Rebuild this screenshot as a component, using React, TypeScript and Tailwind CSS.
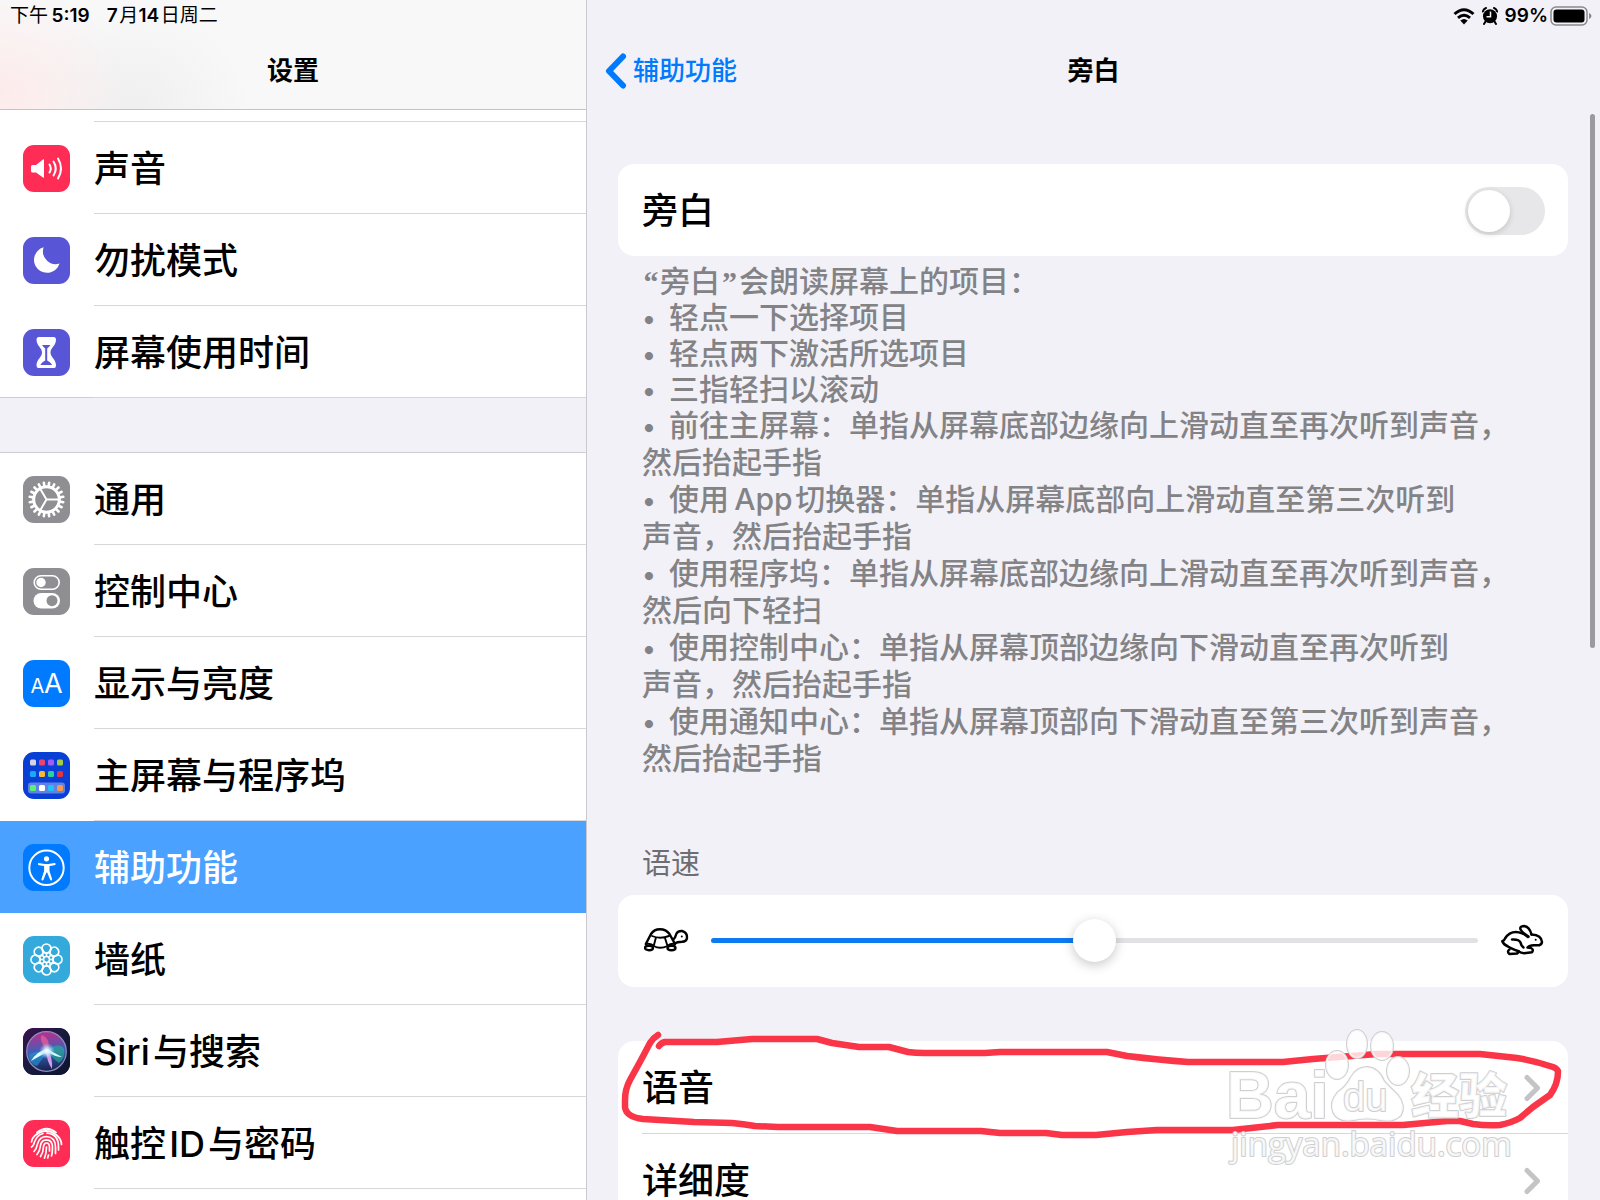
import { useState, type ReactNode } from "react";
import { clsx } from "clsx";

const GEAR_TEETH = Array.from({ length: 20 }, (_, i) => i * 18);
const PETALS = Array.from({ length: 8 }, (_, i) => i * 45);
const APP_COLORS = [
  ["#d5d5e0", "#f0426e", "#a55cf5", "#a5cf3f"],
  ["#17aaf5", "#f5b92c", "#2ecf9f", "#e8333f"],
  ["#5cf07a", "#ffffff", "#1fc4fa", "#f79a4b"],
];

function SoundIcon() {
  return (
    <>
      <path d="M9.5 20H13l7-5.600q1-.6 1 .6v17q0 1.200-1 .6L13 27.500H9.500q-1.500 0-1.500-1.500v-4.500q0-1.500 1.500-1.500z" fill="#fff" />
      <g fill="none" stroke="#fff" strokeWidth="2" strokeLinecap="round">
        <path d="M26.500 19.500q2.500 4 0 8" />
        <path d="M30.500 16.500q4.500 7 0 14" />
        <path d="M35 13.500q6 10 0 20" />
      </g>
    </>
  );
}

function MoonIcon() {
  return <path d="M20.600 10.300A13 13 0 1 0 36.500 26.500A12.800 12.800 0 0 1 20.600 10.300z" fill="#fff" />;
}

function HourglassIcon() {
  return (
    <>
      <path
        d="M15.500 8h15.500q2 0 2 2.500c0 6.500-5.500 8-5.500 13s5.500 6.500 5.500 13q0 2.500-2 2.500h-15.500q-2 0-2-2.500c0-6.500 5.500-8 5.500-13s-5.500-6.500-5.500-13q0-2.500 2-2.500z"
        fill="#fff"
      />
      <path d="M19 16h8.500q-2 2.500-3.300 3.500v12q3 1 5 4.500h-12q2-3.500 5-4.500v-12q-1.500-1-3.200-3.500z" fill="#5856d6" />
    </>
  );
}

function GearIcon() {
  return (
    <g transform="translate(23.500 23.500)" stroke="#fff" fill="none">
      <circle r="12.800" strokeWidth="3" />
      {GEAR_TEETH.map((angle) => (
        <path key={angle} d="M13.500 0H17" strokeWidth="2.600" strokeLinecap="round" transform={`rotate(${angle + 9})`} />
      ))}
      <path d="M0 0H12.500M0 0L-6.300-10.800M0 0L-6.300 10.800" strokeWidth="2" />
    </g>
  );
}

function SwitchesIcon() {
  return (
    <>
      <rect x="11.200" y="7.700" width="25" height="13.600" rx="6.800" fill="none" stroke="#fff" strokeWidth="1.600" />
      <circle cx="18" cy="14.500" r="4.700" fill="#fff" />
      <rect x="10.500" y="25" width="26.500" height="15.500" rx="7.700" fill="#fff" />
      <circle cx="29" cy="32.700" r="5.500" fill="#8e8e93" />
    </>
  );
}

function TextSizeIcon() {
  return (
    <g fill="#fff" className="font-[Inter]">
      <text x="7.500" y="33" fontSize="20">A</text>
      <text x="21" y="33" fontSize="27">A</text>
    </g>
  );
}

function HomeScreenIcon() {
  return (
    <>
      <rect x="5" y="30.500" width="37" height="11" rx="3" fill="#fff" opacity=".35" />
      {APP_COLORS.map((row, y) =>
        row.map((color, x) => (
          <rect key={color} x={7 + x * 9} y={[7.500, 19, 33][y]} width="6" height="6" rx="1.500" fill={color} />
        ))
      )}
    </>
  );
}

function AccessibilityIcon() {
  return (
    <>
      <circle cx="23.500" cy="23.800" r="17.200" fill="none" stroke="#fff" strokeWidth="2" />
      <circle cx="23.500" cy="14.800" r="2.600" fill="#fff" />
      <path
        d="M15.500 19l6 1h4l6-1q1.200 0 1.200 1t-1.200 1.200l-5 .9v4.900l2.600 8q.2 1.200-.7 1.400t-1.400-.9l-2.800-7h-.8l-2.800 7q-.5 1.100-1.400.9t-.7-1.400l2.600-8v-4.900l-5-.9q-1.200-.2-1.200-1.200t1.200-1z"
        fill="#fff"
      />
    </>
  );
}

function WallpaperIcon() {
  return (
    <g transform="translate(23.500 23.500)" fill="none" stroke="#fff" strokeWidth="1.700">
      <circle r="3" />
      {PETALS.map((angle) => (
        <circle key={angle} cy="-11" r="4.500" transform={`rotate(${angle})`} />
      ))}
      {PETALS.map((angle) => (
        <path key={angle} d="M-2.500-7.300Q0-5 2.500-7.300M0-3V-6" transform={`rotate(${angle})`} />
      ))}
    </g>
  );
}

function SiriIcon() {
  return (
    <>
      <defs>
        <linearGradient id="siri-bg" x1="0" y1="0" x2="1" y2="1">
          <stop offset="0" stopColor="#3d1150" />
          <stop offset=".5" stopColor="#171b3d" />
          <stop offset="1" stopColor="#0b1430" />
        </linearGradient>
        <linearGradient id="siri-orb" x1=".4" y1="0" x2=".5" y2="1">
          <stop offset="0" stopColor="#c02c8c" />
          <stop offset=".5" stopColor="#3d60b8" />
          <stop offset="1" stopColor="#15204c" />
        </linearGradient>
        <radialGradient id="siri-glow">
          <stop offset="0" stopColor="#fff" />
          <stop offset=".4" stopColor="#d6f2ff" stopOpacity=".8" />
          <stop offset="1" stopColor="#7fc8ff" stopOpacity="0" />
        </radialGradient>
      </defs>
      <rect width="47" height="47" rx="11" fill="url(#siri-bg)" />
      <circle cx="23.500" cy="23.500" r="19.800" fill="url(#siri-orb)" stroke="#8f8fb8" strokeWidth="1.200" />
      <path d="M24 24Q12 22 6 27Q6 36 14 38Q20 30 24 24z" fill="#1f9bd8" opacity=".6" />
      <path d="M24 23Q34 14 41 20Q43 30 36 35Q28 29 24 23z" fill="#22b596" opacity=".6" />
      <path d="M24 23Q15 11 19 7Q29 12 24 23z" fill="#ef5f97" opacity=".7" />
      <path d="M24 24L8 33Q14 23 24 21L39 29Q32 29 25 24z" fill="#dffcff" />
      <path d="M23 23Q24 34 29 41Q30 31 25 22z" fill="#d59bec" />
      <circle cx="24" cy="23" r="8" fill="url(#siri-glow)" />
    </>
  );
}

function FingerprintIcon() {
  return (
    <g fill="none" stroke="#fff" strokeWidth="1.700" strokeLinecap="round">
      <path d="M14 12.500Q23.500 5 33 12.500" />
      <path d="M8.500 22Q9 18 12 15.500Q23.500 6.500 34 15.500Q38.500 19.500 38.500 24.500" />
      <path d="M8.500 27Q10.500 26 11.500 22Q14 15 20 13.500M24 13.200Q35.500 14 35.500 27V30" />
      <path d="M11 31.500Q13.500 29 14.500 24Q16.500 16.500 23.500 16.500Q32.500 17 32.500 27V33.500" />
      <path d="M14 34.500Q17 31 17.500 25.500Q18.500 19.800 23.500 19.800Q29.500 20 29.500 27.500Q29.500 33 28.500 36" />
      <path d="M17.500 36.500Q20.500 32 20.500 26.500Q21 23 23.500 23Q26.500 23 26.500 27.500V31M25.500 35L24.700 38" />
      <path d="M21.500 38Q23.500 33 23.500 27" />
    </g>
  );
}

type Item = { label: string; bg: string; icon: ReactNode };

const alertItems: Item[] = [
  { label: "声音", bg: "bg-[#ff2d55]", icon: <SoundIcon /> },
  { label: "勿扰模式", bg: "bg-[#5856d6]", icon: <MoonIcon /> },
  { label: "屏幕使用时间", bg: "bg-[#5856d6]", icon: <HourglassIcon /> },
];

// hair spaces separate the Latin words from the Chinese text
const generalItems: Item[] = [
  { label: "通用", bg: "bg-[#8e8e93]", icon: <GearIcon /> },
  { label: "控制中心", bg: "bg-[#8e8e93]", icon: <SwitchesIcon /> },
  { label: "显示与亮度", bg: "bg-[#007aff]", icon: <TextSizeIcon /> },
  { label: "主屏幕与程序坞", bg: "bg-[#0a3fd6]", icon: <HomeScreenIcon /> },
  { label: "辅助功能", bg: "bg-[#007aff]", icon: <AccessibilityIcon /> },
  { label: "墙纸", bg: "bg-[#34aadc]", icon: <WallpaperIcon /> },
  { label: "Siri\u200a与搜索", bg: "bg-[#171b3d]", icon: <SiriIcon /> },
  { label: "触控\u200aID\u200a与密码", bg: "bg-[#ff2d55]", icon: <FingerprintIcon /> },
];

// each entry is one bullet, broken where the panel breaks its lines
const tips = [
  ["轻点一下选择项目"],
  ["轻点两下激活所选项目"],
  ["三指轻扫以滚动"],
  ["前往主屏幕：单指从屏幕底部边缘向上滑动直至再次听到声音，", "然后抬起手指"],
  ["使用\u2009App\u200a切换器：单指从屏幕底部向上滑动直至第三次听到", "声音，然后抬起手指"],
  ["使用程序坞：单指从屏幕底部边缘向上滑动直至再次听到声音，", "然后向下轻扫"],
  ["使用控制中心：单指从屏幕顶部边缘向下滑动直至再次听到", "声音，然后抬起手指"],
  ["使用通知中心：单指从屏幕顶部向下滑动直至第三次听到声音，", "然后抬起手指"],
];

function SidebarRow({ item, selected }: { item: Item; selected?: boolean }) {
  return (
    <a
      href="#"
      aria-current={selected ? "page" : undefined}
      className={clsx("flex h-[92px] items-center pl-[23px]", selected ? "bg-[#4aa1ff] text-white" : "bg-white")}
    >
      <span className={clsx("size-[47px] shrink-0 overflow-hidden rounded-[11px]", item.bg)}>
        <svg viewBox="0 0 47 47" className="size-full" aria-hidden="true">
          {item.icon}
        </svg>
      </span>
      <span
        className={clsx(
          "ml-6 flex h-full flex-1 items-center border-b pt-[2px] text-[36px] font-medium whitespace-nowrap",
          selected ? "border-transparent" : "border-[#d8d8da]"
        )}
      >
        {item.label}
      </span>
    </a>
  );
}

function Sidebar() {
  return (
    <aside className="flex w-[587px] shrink-0 flex-col border-r border-[#c9c9ce] bg-white">
      <header className="h-[110px] shrink-0 border-b border-[#c4c4c6] bg-[#f8f8f9] bg-[radial-gradient(ellipse_130px_110px_at_0px_95px,#fdebea,transparent),radial-gradient(ellipse_120px_100px_at_130px_110px,#efeff0,transparent)]">
        <div className="flex h-8 items-center gap-[17px] pl-[10px] text-[19px]">
          <span>
            下午{"\u2009"}
            <b className="font-semibold">5:19</b>
          </span>
          <span>
            <b className="font-semibold">7</b>
            {"\u200a"}月<b className="font-semibold">14</b>
            {"\u200a"}日周二
          </span>
        </div>
        <h1 className="flex h-[77px] items-center justify-center text-[26px] font-bold">设置</h1>
      </header>
      <nav aria-label="设置">
        <div className="ml-[94px] h-3 border-b border-[#d8d8da]" />
        {alertItems.map((item) => (
          <SidebarRow key={item.label} item={item} />
        ))}
        <div className="-mt-px h-14 border-y border-[#cfcfd3] bg-[#f2f1f7]" />
        {generalItems.map((item) => (
          <SidebarRow key={item.label} item={item} selected={item.label === "辅助功能"} />
        ))}
      </nav>
    </aside>
  );
}

function StatusIcons() {
  return (
    <div className="flex h-8 items-center justify-end pr-2">
      <svg viewBox="0 0 22 17" className="h-[17px] w-[22px]" aria-label="Wi-Fi">
        <path d="M1.500 6Q11-2.500 20.500 6M5 9.800Q11 4.800 17 9.800" fill="none" stroke="#000" strokeWidth="3" />
        <path d="M7.300 12.600Q11 9.400 14.700 12.600L11 16.600z" />
      </svg>
      <svg viewBox="0 0 16 18" className="ml-[7px] h-[18px] w-4" aria-label="闹钟">
        <circle cx="8" cy="9.300" r="7" />
        <path d="M.8 4.500Q1.500 2 4 1M15.200 4.500Q14.500 2 12 1M3.500 14.500L2 17M12.500 14.500L14 17" stroke="#000" strokeWidth="2" strokeLinecap="round" fill="none" />
        <path d="M8.500 4.500V9.800H4.500" stroke="#f2f1f7" strokeWidth="1.500" fill="none" />
      </svg>
      <span className="ml-[7px] text-[19px] font-semibold">99%</span>
      <svg viewBox="0 0 42 20" className="ml-[2px] h-5 w-[42px]" aria-label="电池">
        <rect x="1" y="1" width="36" height="18" rx="5" fill="none" stroke="#8a8a8e" strokeWidth="1.500" />
        <rect x="3.500" y="3.500" width="31" height="13" rx="3" />
        <path d="M39 7q2.500 1 2.500 3t-2.500 3z" fill="#8a8a8e" />
      </svg>
    </div>
  );
}

function Turtle() {
  return (
    <svg viewBox="0 0 46 26" className="h-[26px] w-[46px] shrink-0" fill="none" stroke="#000" strokeWidth="2.400" strokeLinecap="round" strokeLinejoin="round" aria-hidden="true">
      <path d="M1.800 17L7 7Q10 2.200 16 2.200T25.500 7L31 17" />
      <path d="M8 9Q16 12.500 25 9M11.800 11L9.700 19M21 11L23.500 19M2 17Q7 16 9.700 19Q16 22.500 23.500 19Q27 16 31 17" strokeWidth="1.900" />
      <ellipse cx="5" cy="21" rx="4" ry="2.200" />
      <ellipse cx="27.500" cy="21" rx="4" ry="2.200" />
      <path d="M29 13Q31.500 10.500 32.500 6.500Q34 3.800 38 4Q43.500 5.500 43 11Q42.500 14.500 38 14.800Q33 15 30.500 16.500" />
      <circle cx="37.800" cy="9.500" r="1" fill="#000" stroke="none" />
    </svg>
  );
}

function Rabbit() {
  return (
    <svg viewBox="0 0 45 34" className="h-[34px] w-[45px] shrink-0" fill="none" stroke="#000" strokeWidth="2.500" strokeLinecap="round" strokeLinejoin="round" aria-hidden="true">
      <path d="M31.500 11.500Q29.500 3.500 24 3Q19.500 3.200 20.500 6.500Q22.500 10 28.500 13.500" />
      <path d="M31.500 11.500Q41.500 12 42 19Q41.500 22.800 36 22.300Q30 21.500 27.500 24.500L31 25Q34 26.500 32 29.300L24 30.200Q21 30.200 18 28Q11 25.500 8 23.500Q3.500 21.500 2.300 18.200Q4.500 17.500 5 15.500Q9 9 16 9Q22 9 28 14" />
      <path d="M12 16.500Q19 16 20.500 19.500Q21 22.500 23.500 24.500" />
      <path d="M9.500 26.500Q6.500 28.500 9.500 31L17 30.500L19 28.500" />
      <circle cx="35.700" cy="16.800" r="1" fill="#000" stroke="none" />
    </svg>
  );
}

function DisclosureRow({ label, first }: { label: string; first?: boolean }) {
  return (
    <a
      href="#"
      className={clsx("ml-6 flex h-[92px] items-center justify-between pt-[2px] pr-[27px] text-[36px] font-medium", !first && "border-t border-[#d8d8da]")}
    >
      {label}
      <svg viewBox="0 0 17 28" className="h-7 w-[17px]" fill="none" stroke="#c4c4c7" strokeWidth="5" strokeLinecap="round" strokeLinejoin="round" aria-hidden="true">
        <path d="M3 3.500L13.500 14L3 24.500" />
      </svg>
    </a>
  );
}

function PenMark() {
  return (
    <svg viewBox="618 1000 982 200" className="pointer-events-none absolute -top-[41px] left-0 h-[200px] w-[982px]" aria-hidden="true">
      <path
        d="M658 1035Q653 1038 650 1043L641 1060L630 1080Q625 1089 625 1100V1107Q626 1117 643 1119L694 1122L732 1123Q743 1124 755 1126L778 1127H870L897 1131L981 1131L1000 1133H1046L1062 1135H1096L1127 1132L1157 1130H1233L1278 1125H1403L1447 1121H1460L1473 1124Q1487 1126 1500 1125Q1511 1123 1520 1118L1533 1107L1550 1095Q1558 1084 1558 1072Q1558 1069 1553 1067Q1535 1061 1517 1058L1480 1054H1377L1313 1059L1283 1062H1188Q1160 1060 1127 1056L1107 1052H1000L985 1053H924Q915 1053 908 1052L889 1047H859L832 1043L817 1039H752L717 1042H665Q661 1043 659 1046"
        fill="none"
        stroke="#fa3547"
        strokeWidth="6.500"
        strokeLinecap="round"
        strokeLinejoin="round"
      />
    </svg>
  );
}

function Watermark() {
  return (
    <svg
      viewBox="1218 1020 300 150"
      className="pointer-events-none absolute -top-5 right-[50px] h-[150px] w-[300px]"
      fill="#fff"
      fillOpacity=".8"
      stroke="#cfcfd1"
      strokeWidth="2"
      paintOrder="stroke"
      strokeLinejoin="round"
    >
      <ellipse cx="1337" cy="1064" rx="11" ry="14" />
      <ellipse cx="1357" cy="1043" rx="10" ry="14" />
      <ellipse cx="1382" cy="1045" rx="11" ry="14" />
      <ellipse cx="1398" cy="1070" rx="11" ry="14" />
      <path d="M1367 1066Q1379 1067 1384 1080Q1390 1087 1398 1094Q1406 1105 1401 1114Q1394 1122 1380 1119Q1367 1116 1354 1119Q1338 1122 1333 1111Q1329 1101 1338 1091Q1346 1086 1351 1076Q1357 1066 1367 1066z" />
      <text x="1226" y="1117" fontSize="66" className="font-['Liberation_Sans'] font-bold">Bai</text>
      <text x="1343" y="1110" fontSize="40" className="font-['Liberation_Sans']">du</text>
      <text x="1411" y="1112" fontSize="48" className="font-['Noto_Sans_CJK_SC'] font-black">经验</text>
      <text x="1231" y="1155" fontSize="33" className="font-['Open_Sans']">jingyan.baidu.com</text>
    </svg>
  );
}

function VoiceOverPanel() {
  const [enabled, setEnabled] = useState(false);
  const [rate, setRate] = useState(50);

  return (
    <main className="relative min-w-0 flex-1">
      <header className="h-[110px]">
        <StatusIcons />
        <div className="grid h-[77px] grid-cols-[1fr_auto_1fr] items-center px-[18px] text-[26px]">
          <a href="#" className="flex items-center gap-[6px] font-medium text-[#007aff]">
            <svg viewBox="0 0 22 36" className="h-9 w-[22px]" fill="none" stroke="currentColor" strokeWidth="6" strokeLinecap="round" strokeLinejoin="round" aria-hidden="true">
              <path d="M18 3.500L4 18L18 32.500" />
            </svg>
            辅助功能
          </a>
          <h2 className="font-bold">旁白</h2>
        </div>
      </header>

      <div className="pt-[54px] pr-8 pl-[31px]">
        <label className="flex h-[92px] items-center justify-between rounded-2xl bg-white pt-[2px] pr-[23px] pl-6 text-[36px] font-medium">
          旁白
          <input
            type="checkbox"
            role="switch"
            checked={enabled}
            onChange={(e) => setEnabled(e.target.checked)}
            className="flex h-12 w-20 appearance-none items-center rounded-full bg-[#e7e7e9] px-[3px] before:size-[42px] before:rounded-full before:bg-white before:shadow-[0_2px_6px_rgba(0,0,0,0.15)] before:content-[''] checked:justify-end checked:bg-[#34c759]"
          />
        </label>

        <div className="px-6 pt-[7px] text-[30px] font-medium whitespace-nowrap text-[#838386]">
          <p className="leading-[36px]">
            <span className="inline-block w-[18px] text-center font-['Liberation_Serif'] leading-none font-bold">“</span>
            旁白
            <span className="inline-block w-[19px] text-center font-['Liberation_Serif'] leading-none font-bold">”</span>
            会朗读屏幕上的项目：
          </p>
          <ul>
            {tips.map((lines) => (
              <li key={lines[0]} className={lines.length > 1 ? "leading-[37px]" : "leading-[36px]"}>
                <span className="inline-block w-[27px] text-[26px] leading-none">•</span>
                {lines[0]}
                {lines[1] && <span className="block">{lines[1]}</span>}
              </li>
            ))}
          </ul>
        </div>

        <label htmlFor="rate" className="mt-[69px] block px-6 text-[29px] leading-[36px] text-[#6d6d72]">
          语速
        </label>
        <div className="mt-[13px] flex h-[92px] items-center rounded-2xl bg-white pr-[23px] pb-[2px] pl-[26px]">
          <Turtle />
          <input
            id="rate"
            type="range"
            value={rate}
            onChange={(e) => setRate(Number(e.target.value))}
            style={{ backgroundImage: `linear-gradient(to right, #0e7aef ${rate}%, #e2e2e4 ${rate}%)` }}
            className="mr-[22px] ml-[21px] h-[5px] min-w-0 flex-1 appearance-none rounded-full [&::-webkit-slider-thumb]:size-[43px] [&::-webkit-slider-thumb]:appearance-none [&::-webkit-slider-thumb]:rounded-full [&::-webkit-slider-thumb]:bg-white [&::-webkit-slider-thumb]:shadow-[0_3px_12px_rgba(0,0,0,0.22)]"
          />
          <Rabbit />
        </div>

        <div className="relative mt-[54px] rounded-2xl bg-white">
          <DisclosureRow label="语音" first />
          <DisclosureRow label="详细度" />
          <PenMark />
          <Watermark />
        </div>
      </div>

      {/* scroll indicator */}
      <div className="absolute top-[114px] right-[5px] h-[534px] w-[5px] rounded-full bg-[#9b9a9f]" />
    </main>
  );
}

export default function App() {
  return (
    <div className="flex h-screen overflow-hidden bg-[#f2f1f7] font-[Inter,'Noto_Sans_CJK_SC',sans-serif] text-black">
      <Sidebar />
      <VoiceOverPanel />
    </div>
  );
}
